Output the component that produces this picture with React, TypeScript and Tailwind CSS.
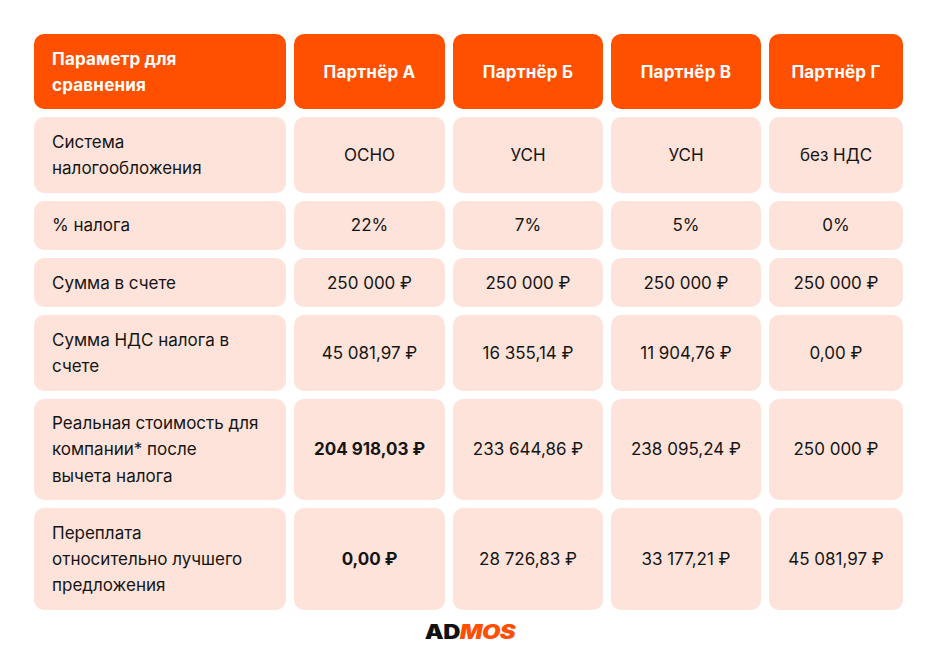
const headers = ["Партнёр А", "Партнёр Б", "Партнёр В", "Партнёр Г"];

type Row = { label: string[]; values: string[]; bold?: number[] };

const rows: Row[] = [
  { label: ["Система", "налогообложения"], values: ["ОСНО", "УСН", "УСН", "без НДС"] },
  { label: ["% налога"], values: ["22%", "7%", "5%", "0%"] },
  { label: ["Сумма в счете"], values: ["250 000 ₽", "250 000 ₽", "250 000 ₽", "250 000 ₽"] },
  { label: ["Сумма НДС налога в", "счете"], values: ["45 081,97 ₽", "16 355,14 ₽", "11 904,76 ₽", "0,00 ₽"] },
  {
    label: ["Реальная стоимость для", "компании* после", "вычета налога"],
    values: ["204 918,03 ₽", "233 644,86 ₽", "238 095,24 ₽", "250 000 ₽"],
    bold: [0],
  },
  {
    label: ["Переплата", "относительно лучшего", "предложения"],
    values: ["0,00 ₽", "28 726,83 ₽", "33 177,21 ₽", "45 081,97 ₽"],
    bold: [0],
  },
];

export default function App() {
  return (
    <div className="w-[936px] h-[656px] bg-white pt-[34px] pl-[34px] text-[17px] leading-[26.2px] text-[#151515] font-['Inter','Noto_Sans',sans-serif]">
      <div className="grid grid-cols-[252px_151px_150px_150px_134px] gap-2">
        {/* Header */}
        <div className="rounded-[10px] bg-[#ff5000] px-[18px] py-[11.5px] flex flex-col justify-center font-bold text-white tracking-[0.2px]">
          <span>Параметр для</span>
          <span>сравнения</span>
        </div>
        {headers.map((h) => (
          <div key={h} className="rounded-[10px] bg-[#ff5000] py-[11.5px] flex items-center justify-center font-bold text-white tracking-[0.2px]">
            {h}
          </div>
        ))}

        {/* Body rows */}
        {rows.map((r) => (
          <>
            <div key={r.label[0]} className="rounded-[10px] bg-[#fde3d9] pl-[18px] pr-2 py-[11.5px] flex flex-col justify-center whitespace-nowrap">
              {r.label.map((l) => (
                <span key={l}>{l}</span>
              ))}
            </div>
            {r.values.map((v, i) => (
              <div
                key={r.label[0] + i}
                className={
                  "rounded-[10px] bg-[#fde3d9] py-[11.5px] flex items-center justify-center " +
                  (r.bold?.includes(i) ? "font-bold" : "")
                }
              >
                {v}
              </div>
            ))}
          </>
        ))}
      </div>

      {/* Logo */}
      <div className="flex justify-center pr-[34px] mt-[13px] ml-[4px]">
        <div className="flex items-baseline text-[19.5px] leading-none font-black tracking-[-0.5px] scale-x-[1.22] font-['Inter',sans-serif]">
          <span className="text-[#111]">AD</span>
          <span className="text-[#ff5000] italic">MOS</span>
        </div>
      </div>
    </div>
  );
}
